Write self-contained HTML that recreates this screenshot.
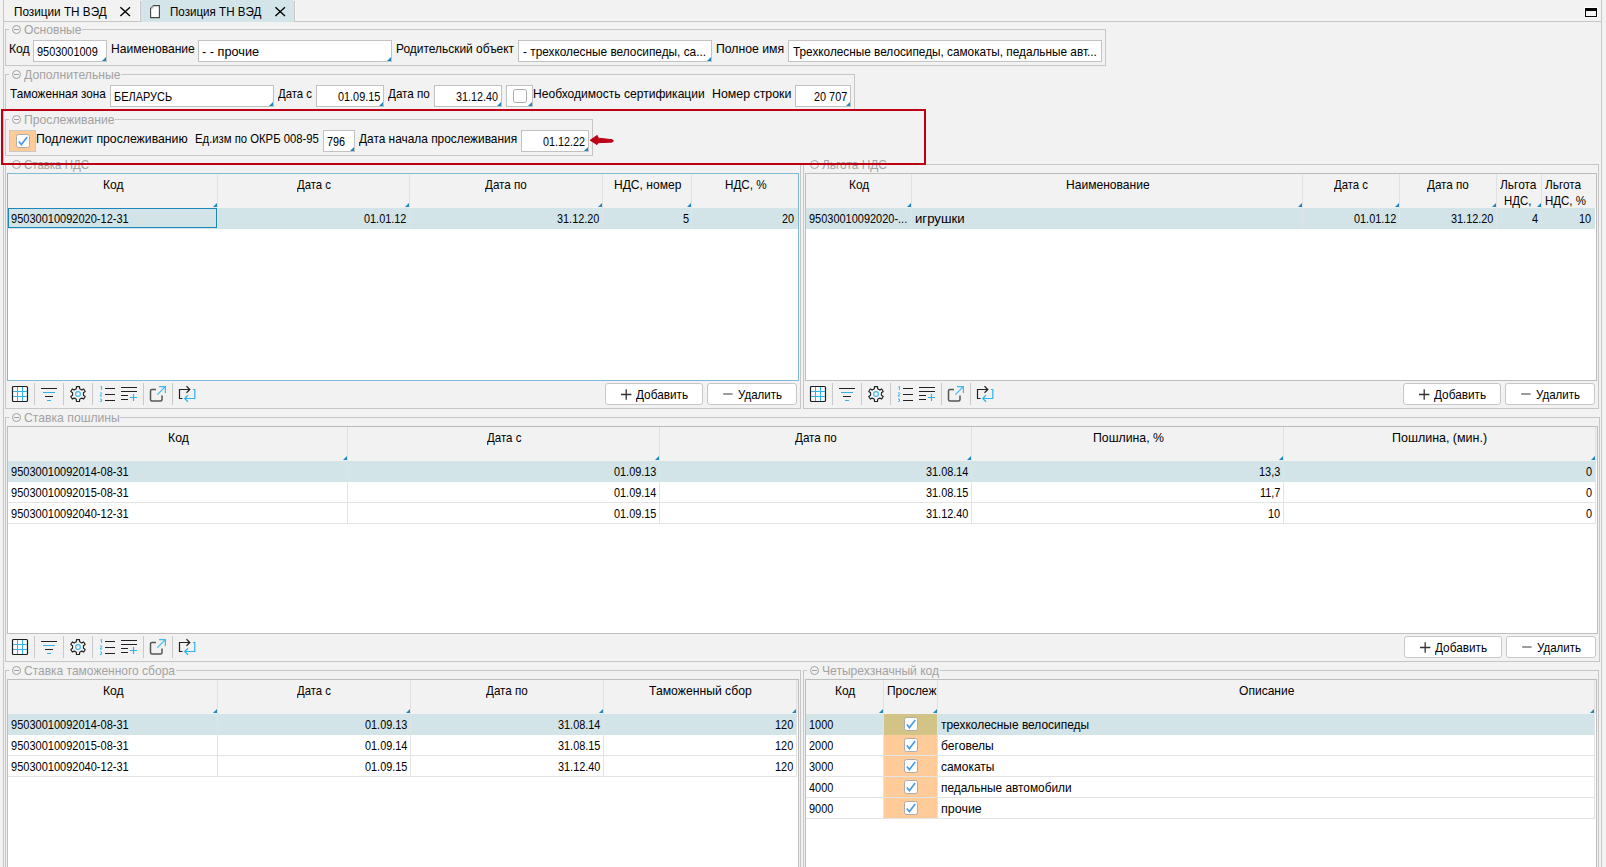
<!DOCTYPE html>
<html lang="ru"><head><meta charset="utf-8"><title>Позиция ТН ВЭД</title>
<style>
html,body{margin:0;padding:0;background:#f2f2f2}
body{width:1606px;height:867px;overflow:hidden;position:relative;background:#f2f2f2;font-family:"Liberation Sans",sans-serif;font-size:13px;color:#000}
div,.a{position:absolute}
svg{display:block;overflow:visible}
.t{position:absolute;white-space:nowrap;line-height:16px;transform-origin:0 0;display:block}
</style></head><body>
<div style="left:3px;top:0px;width:1px;height:867px;background:#c6c6c6;"></div>
<div style="left:1601px;top:0px;width:1px;height:867px;background:#c6c6c6;"></div>
<div style="left:4px;top:21px;width:137px;height:1px;background:#c6c6c6;"></div>
<div style="left:294px;top:21px;width:1307px;height:1px;background:#c6c6c6;"></div>
<div style="left:141px;top:0px;width:153px;height:22px;background:#d4e5ea;border-radius:2px 2px 0 0;"></div>
<div style="left:140px;top:1px;width:1px;height:21px;background:#c6c6c6;"></div>
<div style="left:294px;top:1px;width:1px;height:21px;background:#c6c6c6;"></div>
<div style="left:139px;top:2px;width:1px;height:19px;background:#f8f8f8;"></div>
<div style="left:295px;top:2px;width:1px;height:19px;background:#f8f8f8;"></div>
<span class="t" style="left:13.75px;top:3.50px;transform:scaleX(0.9037);">Позиции ТН ВЭД</span>
<span class="t" style="left:169.86px;top:3.50px;transform:scaleX(0.8926);">Позиция ТН ВЭД</span>
<svg class="a" style="left:120px;top:7px" width="11" height="10"><path d="M.4 .2L10 9M10 .2L.4 9" stroke="#000" stroke-width="1.35" fill="none"/></svg>
<svg class="a" style="left:275px;top:7px" width="11" height="10"><path d="M.4 .2L10 9M10 .2L.4 9" stroke="#000" stroke-width="1.35" fill="none"/></svg>
<svg class="a" style="left:150px;top:5px" width="11" height="14"><path d="M3.5 .6H9.4V12.6H.6V3.5Z" fill="#fff" stroke="#444" stroke-width="1.1"/><path d="M.6 3.5H3.5V.6Z" fill="#bbb"/></svg>
<svg class="a" style="left:1584px;top:7px" width="14" height="11"><rect x="0" y="0" width="14" height="11" fill="#fff" opacity=".9"/><rect x="1" y="1" width="12" height="9" fill="#000"/><rect x="2" y="4" width="10" height="5" fill="#f4f4f4"/></svg>
<div style="left:5px;top:29px;width:1101px;height:1px;background:#c6c6c6;"></div>
<div style="left:5px;top:29px;width:1px;height:37px;background:#c6c6c6;"></div>
<div style="left:1105px;top:29px;width:1px;height:37px;background:#c6c6c6;"></div>
<div style="left:5px;top:65px;width:1101px;height:1px;background:#c6c6c6;"></div>
<div style="left:9px;top:23px;width:73px;height:12px;background:#f2f2f2;"></div>
<svg class="a" style="left:11px;top:24px" width="11" height="11"><circle cx="5.5" cy="5.5" r="4" fill="none" stroke="#a2a2a2" stroke-width="1"/><path d="M3 5.5H8" stroke="#a2a2a2" stroke-width="1"/></svg>
<span class="t" style="left:24.00px;top:21.50px;transform:scaleX(0.9328);color:#a2a2a2;">Основные</span>
<span class="t" style="left:8.62px;top:40.50px;transform:scaleX(0.9371);">Код</span>
<div style="left:33px;top:40px;width:74px;height:22px;background:#fff;border:1px solid #c2c2c2;box-sizing:border-box;"></div>
<svg class="a" style="left:102px;top:57px" width="4" height="4"><path d="M4 0V4H0Z" fill="#1b87bf"/></svg>
<span class="t" style="left:36.80px;top:43.50px;transform:scaleX(0.8401);">9503001009</span>
<span class="t" style="left:111.02px;top:40.50px;transform:scaleX(0.9298);">Наименование</span>
<div style="left:198px;top:40px;width:194px;height:22px;background:#fff;border:1px solid #c2c2c2;box-sizing:border-box;"></div>
<svg class="a" style="left:387px;top:57px" width="4" height="4"><path d="M4 0V4H0Z" fill="#1b87bf"/></svg>
<span class="t" style="left:202.36px;top:43.50px;transform:scaleX(0.9796);">- - прочие</span>
<span class="t" style="left:396.04px;top:40.50px;transform:scaleX(0.9182);">Родительский объект</span>
<div style="left:518px;top:40px;width:194px;height:22px;background:#fff;border:1px solid #c2c2c2;box-sizing:border-box;"></div>
<svg class="a" style="left:707px;top:57px" width="4" height="4"><path d="M4 0V4H0Z" fill="#1b87bf"/></svg>
<span class="t" style="left:522.50px;top:43.50px;transform:scaleX(0.9106);">- трехколесные велосипеды, са...</span>
<span class="t" style="left:716.11px;top:40.50px;transform:scaleX(0.9416);">Полное имя</span>
<div style="left:788px;top:40px;width:314px;height:22px;background:#fff;border:1px solid #c2c2c2;box-sizing:border-box;"></div>
<span class="t" style="left:792.73px;top:43.50px;transform:scaleX(0.9074);">Трехколесные велосипеды, самокаты, педальные авт...</span>
<div style="left:5px;top:74px;width:850px;height:1px;background:#c6c6c6;"></div>
<div style="left:5px;top:74px;width:1px;height:37px;background:#c6c6c6;"></div>
<div style="left:854px;top:74px;width:1px;height:37px;background:#c6c6c6;"></div>
<div style="left:5px;top:110px;width:850px;height:1px;background:#c6c6c6;"></div>
<div style="left:9px;top:68px;width:112px;height:12px;background:#f2f2f2;"></div>
<svg class="a" style="left:11px;top:69px" width="11" height="11"><circle cx="5.5" cy="5.5" r="4" fill="none" stroke="#a2a2a2" stroke-width="1"/><path d="M3 5.5H8" stroke="#a2a2a2" stroke-width="1"/></svg>
<span class="t" style="left:24.00px;top:66.50px;transform:scaleX(0.9378);color:#a2a2a2;">Дополнительные</span>
<span class="t" style="left:9.83px;top:85.50px;transform:scaleX(0.9013);">Таможенная зона</span>
<div style="left:110px;top:85px;width:164px;height:22px;background:#fff;border:1px solid #c2c2c2;box-sizing:border-box;"></div>
<svg class="a" style="left:269px;top:102px" width="4" height="4"><path d="M4 0V4H0Z" fill="#1b87bf"/></svg>
<span class="t" style="left:114.21px;top:88.50px;transform:scaleX(0.8431);">БЕЛАРУСЬ</span>
<span class="t" style="left:278.11px;top:85.50px;transform:scaleX(0.8736);">Дата с</span>
<div style="left:316px;top:85px;width:68px;height:22px;background:#fff;border:1px solid #c2c2c2;box-sizing:border-box;"></div>
<svg class="a" style="left:379px;top:102px" width="4" height="4"><path d="M4 0V4H0Z" fill="#1b87bf"/></svg>
<span class="t" style="left:338.18px;top:88.50px;transform:scaleX(0.8354);">01.09.15</span>
<span class="t" style="left:388.31px;top:85.50px;transform:scaleX(0.8946);">Дата по</span>
<div style="left:434px;top:85px;width:68px;height:22px;background:#fff;border:1px solid #c2c2c2;box-sizing:border-box;"></div>
<svg class="a" style="left:497px;top:102px" width="4" height="4"><path d="M4 0V4H0Z" fill="#1b87bf"/></svg>
<span class="t" style="left:456.19px;top:88.50px;transform:scaleX(0.8285);">31.12.40</span>
<div style="left:506px;top:85px;width:27px;height:22px;background:#fff;border:1px solid #c2c2c2;box-sizing:border-box;"></div>
<svg class="a" style="left:528px;top:102px" width="4" height="4"><path d="M4 0V4H0Z" fill="#1b87bf"/></svg>
<svg class="a" style="left:513px;top:89px" width="14" height="14"><rect x=".5" y=".5" width="13" height="13" rx="2" fill="#fff" stroke="#aaa"/></svg>
<span class="t" style="left:532.63px;top:85.50px;transform:scaleX(0.9281);">Необходимость сертификации</span>
<span class="t" style="left:712.00px;top:85.50px;transform:scaleX(0.9502);">Номер строки</span>
<div style="left:795px;top:85px;width:56px;height:22px;background:#fff;border:1px solid #c2c2c2;box-sizing:border-box;"></div>
<svg class="a" style="left:846px;top:102px" width="4" height="4"><path d="M4 0V4H0Z" fill="#1b87bf"/></svg>
<span class="t" style="left:814.06px;top:88.50px;transform:scaleX(0.8362);">20 707</span>
<div style="left:5px;top:119px;width:588px;height:1px;background:#c6c6c6;"></div>
<div style="left:5px;top:119px;width:1px;height:37px;background:#c6c6c6;"></div>
<div style="left:592px;top:119px;width:1px;height:37px;background:#c6c6c6;"></div>
<div style="left:5px;top:155px;width:588px;height:1px;background:#c6c6c6;"></div>
<div style="left:9px;top:113px;width:106px;height:12px;background:#f2f2f2;"></div>
<svg class="a" style="left:11px;top:114px" width="11" height="11"><circle cx="5.5" cy="5.5" r="4" fill="none" stroke="#a2a2a2" stroke-width="1"/><path d="M3 5.5H8" stroke="#a2a2a2" stroke-width="1"/></svg>
<span class="t" style="left:24.00px;top:111.50px;transform:scaleX(0.9375);color:#a2a2a2;">Прослеживание</span>
<div style="left:9px;top:130px;width:27px;height:22px;background:#ffcc99;border:1px solid #c8c8c8;box-sizing:border-box;"></div>
<svg class="a" style="left:16px;top:134px" width="14" height="14"><rect x=".5" y=".5" width="13" height="13" rx="2" fill="#fff" stroke="#ababab"/><path d="M2.8 7.4L5.4 10.6L11.2 2.9" fill="none" stroke="#4a9be6" stroke-width="1.6"/></svg>
<span class="t" style="left:35.81px;top:130.50px;transform:scaleX(0.9425);">Подлежит прослеживанию</span>
<span class="t" style="left:195.09px;top:130.50px;transform:scaleX(0.8694);">Ед.изм по ОКРБ 008-95</span>
<div style="left:323px;top:130px;width:32px;height:22px;background:#fff;border:1px solid #c2c2c2;box-sizing:border-box;"></div>
<svg class="a" style="left:350px;top:147px" width="4" height="4"><path d="M4 0V4H0Z" fill="#1b87bf"/></svg>
<span class="t" style="left:327.46px;top:133.50px;transform:scaleX(0.8307);">796</span>
<span class="t" style="left:359.31px;top:130.50px;transform:scaleX(0.9136);">Дата начала прослеживания</span>
<div style="left:521px;top:130px;width:68px;height:22px;background:#fff;border:1px solid #c2c2c2;box-sizing:border-box;"></div>
<svg class="a" style="left:584px;top:147px" width="4" height="4"><path d="M4 0V4H0Z" fill="#1b87bf"/></svg>
<span class="t" style="left:543.09px;top:133.50px;transform:scaleX(0.8290);">01.12.22</span>
<svg class="a" style="left:589px;top:133px" width="28" height="15"><path d="M1.2 7.2L8.2 2.4L9.4 5.2L23.3 6.7Q25.3 7.9 23.3 9.1L9.4 9.7L8 11.6Z" fill="#bd0016" stroke="#bd0016" stroke-width="1" stroke-linejoin="round"/></svg>
<div style="left:5px;top:164px;width:796px;height:1px;background:#c6c6c6;"></div>
<div style="left:5px;top:164px;width:1px;height:245px;background:#c6c6c6;"></div>
<div style="left:800px;top:164px;width:1px;height:245px;background:#c6c6c6;"></div>
<div style="left:5px;top:408px;width:796px;height:1px;background:#c6c6c6;"></div>
<div style="left:9px;top:158px;width:80px;height:12px;background:#f2f2f2;"></div>
<svg class="a" style="left:11px;top:159px" width="11" height="11"><circle cx="5.5" cy="5.5" r="4" fill="none" stroke="#a2a2a2" stroke-width="1"/><path d="M3 5.5H8" stroke="#a2a2a2" stroke-width="1"/></svg>
<span class="t" style="left:24.00px;top:156.50px;transform:scaleX(0.8805);color:#a2a2a2;">Ставка НДС</span>
<div style="left:803px;top:164px;width:796px;height:1px;background:#c6c6c6;"></div>
<div style="left:803px;top:164px;width:1px;height:245px;background:#c6c6c6;"></div>
<div style="left:1598px;top:164px;width:1px;height:245px;background:#c6c6c6;"></div>
<div style="left:803px;top:408px;width:796px;height:1px;background:#c6c6c6;"></div>
<div style="left:807px;top:158px;width:80px;height:12px;background:#f2f2f2;"></div>
<svg class="a" style="left:809px;top:159px" width="11" height="11"><circle cx="5.5" cy="5.5" r="4" fill="none" stroke="#a2a2a2" stroke-width="1"/><path d="M3 5.5H8" stroke="#a2a2a2" stroke-width="1"/></svg>
<span class="t" style="left:822.00px;top:156.50px;transform:scaleX(0.9155);color:#a2a2a2;">Льгота НДС</span>
<div style="left:5px;top:417px;width:1595px;height:1px;background:#c6c6c6;"></div>
<div style="left:5px;top:417px;width:1px;height:245px;background:#c6c6c6;"></div>
<div style="left:1599px;top:417px;width:1px;height:245px;background:#c6c6c6;"></div>
<div style="left:5px;top:661px;width:1595px;height:1px;background:#c6c6c6;"></div>
<div style="left:9px;top:411px;width:111px;height:12px;background:#f2f2f2;"></div>
<svg class="a" style="left:11px;top:412px" width="11" height="11"><circle cx="5.5" cy="5.5" r="4" fill="none" stroke="#a2a2a2" stroke-width="1"/><path d="M3 5.5H8" stroke="#a2a2a2" stroke-width="1"/></svg>
<span class="t" style="left:24.00px;top:409.50px;transform:scaleX(0.9378);color:#a2a2a2;">Ставка пошлины</span>
<div style="left:5px;top:670px;width:796px;height:1px;background:#c6c6c6;"></div>
<div style="left:5px;top:670px;width:1px;height:198px;background:#c6c6c6;"></div>
<div style="left:800px;top:670px;width:1px;height:198px;background:#c6c6c6;"></div>
<div style="left:9px;top:664px;width:167px;height:12px;background:#f2f2f2;"></div>
<svg class="a" style="left:11px;top:665px" width="11" height="11"><circle cx="5.5" cy="5.5" r="4" fill="none" stroke="#a2a2a2" stroke-width="1"/><path d="M3 5.5H8" stroke="#a2a2a2" stroke-width="1"/></svg>
<span class="t" style="left:24.00px;top:662.50px;transform:scaleX(0.9227);color:#a2a2a2;">Ставка таможенного сбора</span>
<div style="left:803px;top:670px;width:796px;height:1px;background:#c6c6c6;"></div>
<div style="left:803px;top:670px;width:1px;height:198px;background:#c6c6c6;"></div>
<div style="left:1598px;top:670px;width:1px;height:198px;background:#c6c6c6;"></div>
<div style="left:807px;top:664px;width:133px;height:12px;background:#f2f2f2;"></div>
<svg class="a" style="left:809px;top:665px" width="11" height="11"><circle cx="5.5" cy="5.5" r="4" fill="none" stroke="#a2a2a2" stroke-width="1"/><path d="M3 5.5H8" stroke="#a2a2a2" stroke-width="1"/></svg>
<span class="t" style="left:822.00px;top:662.50px;transform:scaleX(0.9303);color:#a2a2a2;">Четырехзначный код</span>
<div style="left:7px;top:173px;width:792px;height:208px;background:#fff;border:1px solid #7fb9d5;box-sizing:border-box;"></div>
<div style="left:8px;top:174px;width:790px;height:34px;background:#f2f2f2;"></div>
<div style="left:217px;top:174px;width:1px;height:34px;background:#e1e1e1;"></div>
<div style="left:409px;top:174px;width:1px;height:34px;background:#e1e1e1;"></div>
<div style="left:602px;top:174px;width:1px;height:34px;background:#e1e1e1;"></div>
<div style="left:691px;top:174px;width:1px;height:34px;background:#e1e1e1;"></div>
<svg class="a" style="left:213px;top:203px" width="4" height="4"><path d="M4 0V4H0Z" fill="#1b87bf"/></svg>
<svg class="a" style="left:405px;top:203px" width="4" height="4"><path d="M4 0V4H0Z" fill="#1b87bf"/></svg>
<svg class="a" style="left:598px;top:203px" width="4" height="4"><path d="M4 0V4H0Z" fill="#1b87bf"/></svg>
<svg class="a" style="left:687px;top:203px" width="4" height="4"><path d="M4 0V4H0Z" fill="#1b87bf"/></svg>
<span class="t" style="left:102.93px;top:176.50px;transform:scaleX(0.9275);">Код</span>
<span class="t" style="left:297.31px;top:176.50px;transform:scaleX(0.8736);">Дата с</span>
<span class="t" style="left:485.11px;top:176.50px;transform:scaleX(0.8967);">Дата по</span>
<span class="t" style="left:614.13px;top:176.50px;transform:scaleX(0.9273);">НДС, номер</span>
<span class="t" style="left:725.06px;top:176.50px;transform:scaleX(0.8961);">НДС, %</span>
<div style="left:8px;top:208px;width:790px;height:21px;background:#d3e4e9;"></div>
<div style="left:217px;top:208px;width:1px;height:21px;background:#dfe4e6;"></div>
<div style="left:409px;top:208px;width:1px;height:21px;background:#dfe4e6;"></div>
<div style="left:602px;top:208px;width:1px;height:21px;background:#dfe4e6;"></div>
<div style="left:691px;top:208px;width:1px;height:21px;background:#dfe4e6;"></div>
<div style="left:8px;top:208px;width:209px;height:20px;border:1px solid #1b88bd;box-sizing:border-box;"></div>
<span class="t" style="left:11.09px;top:210.50px;transform:scaleX(0.8483);">95030010092020-12-31</span>
<span class="t" style="left:364.12px;top:210.50px;transform:scaleX(0.8383);">01.01.12</span>
<span class="t" style="left:557.00px;top:210.50px;transform:scaleX(0.8383);">31.12.20</span>
<span class="t" style="left:682.57px;top:210.50px;transform:scaleX(0.8401);">5</span>
<span class="t" style="left:782.23px;top:210.50px;transform:scaleX(0.8401);">20</span>
<div style="left:805px;top:173px;width:792px;height:208px;background:#fff;border:1px solid #bdbdbd;box-sizing:border-box;"></div>
<div style="left:806px;top:174px;width:790px;height:34px;background:#f2f2f2;"></div>
<div style="left:911px;top:174px;width:1px;height:34px;background:#e1e1e1;"></div>
<div style="left:1302px;top:174px;width:1px;height:34px;background:#e1e1e1;"></div>
<div style="left:1399px;top:174px;width:1px;height:34px;background:#e1e1e1;"></div>
<div style="left:1496px;top:174px;width:1px;height:34px;background:#e1e1e1;"></div>
<div style="left:1541px;top:174px;width:1px;height:34px;background:#e1e1e1;"></div>
<svg class="a" style="left:907px;top:203px" width="4" height="4"><path d="M4 0V4H0Z" fill="#1b87bf"/></svg>
<svg class="a" style="left:1298px;top:203px" width="4" height="4"><path d="M4 0V4H0Z" fill="#1b87bf"/></svg>
<svg class="a" style="left:1395px;top:203px" width="4" height="4"><path d="M4 0V4H0Z" fill="#1b87bf"/></svg>
<svg class="a" style="left:1492px;top:203px" width="4" height="4"><path d="M4 0V4H0Z" fill="#1b87bf"/></svg>
<svg class="a" style="left:1537px;top:203px" width="4" height="4"><path d="M4 0V4H0Z" fill="#1b87bf"/></svg>
<span class="t" style="left:849.04px;top:176.50px;transform:scaleX(0.9131);">Код</span>
<span class="t" style="left:1066.33px;top:176.50px;transform:scaleX(0.9276);">Наименование</span>
<span class="t" style="left:1333.51px;top:176.50px;transform:scaleX(0.8736);">Дата с</span>
<span class="t" style="left:1427.31px;top:176.50px;transform:scaleX(0.8967);">Дата по</span>
<span class="t" style="left:1499.71px;top:176.50px;transform:scaleX(0.9178);">Льгота</span>
<span class="t" style="left:1545.31px;top:176.50px;transform:scaleX(0.9103);">Льгота</span>
<span class="t" style="left:1503.68px;top:192.50px;transform:scaleX(0.8755);">НДС,</span>
<span class="t" style="left:1545.47px;top:192.50px;transform:scaleX(0.8827);">НДС, %</span>
<div style="left:806px;top:208px;width:789px;height:21px;background:#d3e4e9;"></div>
<div style="left:911px;top:208px;width:1px;height:21px;background:#dfe4e6;"></div>
<div style="left:1302px;top:208px;width:1px;height:21px;background:#dfe4e6;"></div>
<div style="left:1399px;top:208px;width:1px;height:21px;background:#dfe4e6;"></div>
<div style="left:1496px;top:208px;width:1px;height:21px;background:#dfe4e6;"></div>
<div style="left:1541px;top:208px;width:1px;height:21px;background:#dfe4e6;"></div>
<span class="t" style="left:809.19px;top:210.50px;transform:scaleX(0.8437);">95030010092020-...</span>
<span class="t" style="left:915.29px;top:210.50px;transform:scaleX(1.0137);">игрушки</span>
<span class="t" style="left:1353.92px;top:210.50px;transform:scaleX(0.8383);">01.01.12</span>
<span class="t" style="left:1450.80px;top:210.50px;transform:scaleX(0.8383);">31.12.20</span>
<span class="t" style="left:1532.04px;top:210.50px;transform:scaleX(0.8401);">4</span>
<span class="t" style="left:1579.13px;top:210.50px;transform:scaleX(0.8401);">10</span>
<svg class="a" style="left:7px;top:380px" width="200" height="28"><g transform="translate(5,6)"><rect x=".5" y=".5" width="15" height="15" rx="1" fill="#fbfbfb" stroke="#1e1e1e" stroke-width="1.2"/><path d="M5.5 1V15M10.5 1V15M1 5.5H15M1 10.5H15" stroke="#2eb3ec" stroke-width="1"/></g><path d="M27.5 3V25" stroke="#c9c9c9"/><path d="M56.5 3V25" stroke="#c9c9c9"/><path d="M85.5 3V25" stroke="#c9c9c9"/><path d="M136.5 3V25" stroke="#c9c9c9"/><path d="M165.5 3V25" stroke="#c9c9c9"/><path d="M34 8.5H50M38 16.5H46" stroke="#222" stroke-width="1.1"/><path d="M36 12.5H48M40 20.5H44" stroke="#2eb3ec" stroke-width="1.2"/><path d="M69.35 8.65L69.49 6.55L72.51 6.55L72.65 8.65L74.81 9.89L76.70 8.97L78.21 11.58L76.46 12.76L76.46 15.24L78.21 16.42L76.70 19.03L74.81 18.11L72.65 19.35L72.51 21.45L69.49 21.45L69.35 19.35L67.19 18.11L65.30 19.03L63.79 16.42L65.54 15.24L65.54 12.76L63.79 11.58L65.30 8.97L67.19 9.89Z" fill="none" stroke="#222" stroke-width="1.15" stroke-linejoin="round"/><circle cx="71" cy="14" r="2.4" fill="none" stroke="#3fb8ee" stroke-width="1.1"/><path d="M98 8.5H108M98 14.5H108M98 20.5H108" stroke="#222" stroke-width="1.1"/><path d="M93.3 7.2L94.6 6.4V10M93 13.2Q94.8 12 94.8 13.6L93 16H95.2M93 19Q95 18.6 94.6 20Q95.4 21.8 93 21.6" stroke="#2eb3ec" stroke-width=".9" fill="none"/><path d="M114 7.5H130M114 11.5H130M114 15.5H121M114 19.5H121" stroke="#222" stroke-width="1.1"/><path d="M123 17.5H130M126.5 14V21" stroke="#2eb3ec" stroke-width="1.2"/><path d="M149 9.5H145Q143.5 9.5 143.5 11V19.5Q143.5 21 145 21H153.5Q155 21 155 19.5V15.5" fill="none" stroke="#555" stroke-width="1.5"/><path d="M150.4 14.6L158.3 6.7M152 6.6H158.4V13" fill="none" stroke="#3fb8ee" stroke-width="1.2"/><path d="M175.5 18.5H172.5V9.5H182.5M179.5 6.3L182.8 9.5L179.5 12.7" fill="none" stroke="#222" stroke-width="1.2"/><path d="M186 9.5H187.8V18.5H178M181 15.3L177.7 18.5L181 21.7" fill="none" stroke="#2eb3ec" stroke-width="1.2"/></svg>
<div style="left:605px;top:383px;width:98px;height:22px;background:#fff;border:1px solid #c8c8c8;box-sizing:border-box;border-radius:3px;"></div>
<div style="left:707px;top:383px;width:90px;height:22px;background:#fff;border:1px solid #c8c8c8;box-sizing:border-box;border-radius:3px;"></div>
<svg class="a" style="left:621px;top:389px" width="11" height="11"><path d="M0 5.5H10.4M5.2 .3V10.7" stroke="#333" stroke-width="1.3"/></svg>
<svg class="a" style="left:723px;top:393px" width="10" height="2"><path d="M.2 1H9.6" stroke="#666" stroke-width="1.3"/></svg>
<span class="t" style="left:636.31px;top:386.90px;transform:scaleX(0.9076);">Добавить</span>
<span class="t" style="left:737.99px;top:386.90px;transform:scaleX(0.8860);">Удалить</span>
<svg class="a" style="left:805px;top:380px" width="200" height="28"><g transform="translate(5,6)"><rect x=".5" y=".5" width="15" height="15" rx="1" fill="#fbfbfb" stroke="#1e1e1e" stroke-width="1.2"/><path d="M5.5 1V15M10.5 1V15M1 5.5H15M1 10.5H15" stroke="#2eb3ec" stroke-width="1"/></g><path d="M27.5 3V25" stroke="#c9c9c9"/><path d="M56.5 3V25" stroke="#c9c9c9"/><path d="M85.5 3V25" stroke="#c9c9c9"/><path d="M136.5 3V25" stroke="#c9c9c9"/><path d="M165.5 3V25" stroke="#c9c9c9"/><path d="M34 8.5H50M38 16.5H46" stroke="#222" stroke-width="1.1"/><path d="M36 12.5H48M40 20.5H44" stroke="#2eb3ec" stroke-width="1.2"/><path d="M69.35 8.65L69.49 6.55L72.51 6.55L72.65 8.65L74.81 9.89L76.70 8.97L78.21 11.58L76.46 12.76L76.46 15.24L78.21 16.42L76.70 19.03L74.81 18.11L72.65 19.35L72.51 21.45L69.49 21.45L69.35 19.35L67.19 18.11L65.30 19.03L63.79 16.42L65.54 15.24L65.54 12.76L63.79 11.58L65.30 8.97L67.19 9.89Z" fill="none" stroke="#222" stroke-width="1.15" stroke-linejoin="round"/><circle cx="71" cy="14" r="2.4" fill="none" stroke="#3fb8ee" stroke-width="1.1"/><path d="M98 8.5H108M98 14.5H108M98 20.5H108" stroke="#222" stroke-width="1.1"/><path d="M93.3 7.2L94.6 6.4V10M93 13.2Q94.8 12 94.8 13.6L93 16H95.2M93 19Q95 18.6 94.6 20Q95.4 21.8 93 21.6" stroke="#2eb3ec" stroke-width=".9" fill="none"/><path d="M114 7.5H130M114 11.5H130M114 15.5H121M114 19.5H121" stroke="#222" stroke-width="1.1"/><path d="M123 17.5H130M126.5 14V21" stroke="#2eb3ec" stroke-width="1.2"/><path d="M149 9.5H145Q143.5 9.5 143.5 11V19.5Q143.5 21 145 21H153.5Q155 21 155 19.5V15.5" fill="none" stroke="#555" stroke-width="1.5"/><path d="M150.4 14.6L158.3 6.7M152 6.6H158.4V13" fill="none" stroke="#3fb8ee" stroke-width="1.2"/><path d="M175.5 18.5H172.5V9.5H182.5M179.5 6.3L182.8 9.5L179.5 12.7" fill="none" stroke="#222" stroke-width="1.2"/><path d="M186 9.5H187.8V18.5H178M181 15.3L177.7 18.5L181 21.7" fill="none" stroke="#2eb3ec" stroke-width="1.2"/></svg>
<div style="left:1403px;top:383px;width:98px;height:22px;background:#fff;border:1px solid #c8c8c8;box-sizing:border-box;border-radius:3px;"></div>
<div style="left:1505px;top:383px;width:90px;height:22px;background:#fff;border:1px solid #c8c8c8;box-sizing:border-box;border-radius:3px;"></div>
<svg class="a" style="left:1419px;top:389px" width="11" height="11"><path d="M0 5.5H10.4M5.2 .3V10.7" stroke="#333" stroke-width="1.3"/></svg>
<svg class="a" style="left:1521px;top:393px" width="10" height="2"><path d="M.2 1H9.6" stroke="#666" stroke-width="1.3"/></svg>
<span class="t" style="left:1434.31px;top:386.90px;transform:scaleX(0.9076);">Добавить</span>
<span class="t" style="left:1535.99px;top:386.90px;transform:scaleX(0.8860);">Удалить</span>
<div style="left:7px;top:426px;width:1591px;height:208px;background:#fff;border:1px solid #bdbdbd;box-sizing:border-box;"></div>
<div style="left:8px;top:427px;width:1589px;height:34px;background:#f2f2f2;"></div>
<div style="left:347px;top:427px;width:1px;height:34px;background:#e1e1e1;"></div>
<div style="left:659px;top:427px;width:1px;height:34px;background:#e1e1e1;"></div>
<div style="left:971px;top:427px;width:1px;height:34px;background:#e1e1e1;"></div>
<div style="left:1283px;top:427px;width:1px;height:34px;background:#e1e1e1;"></div>
<div style="left:1595px;top:427px;width:1px;height:34px;background:#e1e1e1;"></div>
<svg class="a" style="left:343px;top:456px" width="4" height="4"><path d="M4 0V4H0Z" fill="#1b87bf"/></svg>
<svg class="a" style="left:655px;top:456px" width="4" height="4"><path d="M4 0V4H0Z" fill="#1b87bf"/></svg>
<svg class="a" style="left:967px;top:456px" width="4" height="4"><path d="M4 0V4H0Z" fill="#1b87bf"/></svg>
<svg class="a" style="left:1279px;top:456px" width="4" height="4"><path d="M4 0V4H0Z" fill="#1b87bf"/></svg>
<svg class="a" style="left:1591px;top:456px" width="4" height="4"><path d="M4 0V4H0Z" fill="#1b87bf"/></svg>
<span class="t" style="left:168.21px;top:429.50px;transform:scaleX(0.9420);">Код</span>
<span class="t" style="left:487.11px;top:429.50px;transform:scaleX(0.8840);">Дата с</span>
<span class="t" style="left:795.01px;top:429.50px;transform:scaleX(0.8967);">Дата по</span>
<span class="t" style="left:1092.81px;top:429.50px;transform:scaleX(0.9449);">Пошлина, %</span>
<span class="t" style="left:1392.39px;top:429.50px;transform:scaleX(0.9588);">Пошлина, (мин.)</span>
<div style="left:8px;top:461px;width:1587px;height:21px;background:#d3e4e9;"></div>
<div style="left:347px;top:461px;width:1px;height:21px;background:#dfe4e6;"></div>
<div style="left:659px;top:461px;width:1px;height:21px;background:#dfe4e6;"></div>
<div style="left:971px;top:461px;width:1px;height:21px;background:#dfe4e6;"></div>
<div style="left:1283px;top:461px;width:1px;height:21px;background:#dfe4e6;"></div>
<div style="left:1595px;top:461px;width:1px;height:21px;background:#dfe4e6;"></div>
<div style="left:8px;top:502px;width:1587px;height:1px;background:#e3e3e3;"></div>
<div style="left:347px;top:482px;width:1px;height:21px;background:#e3e3e3;"></div>
<div style="left:659px;top:482px;width:1px;height:21px;background:#e3e3e3;"></div>
<div style="left:971px;top:482px;width:1px;height:21px;background:#e3e3e3;"></div>
<div style="left:1283px;top:482px;width:1px;height:21px;background:#e3e3e3;"></div>
<div style="left:1595px;top:482px;width:1px;height:21px;background:#e3e3e3;"></div>
<div style="left:8px;top:523px;width:1587px;height:1px;background:#e3e3e3;"></div>
<div style="left:347px;top:503px;width:1px;height:21px;background:#e3e3e3;"></div>
<div style="left:659px;top:503px;width:1px;height:21px;background:#e3e3e3;"></div>
<div style="left:971px;top:503px;width:1px;height:21px;background:#e3e3e3;"></div>
<div style="left:1283px;top:503px;width:1px;height:21px;background:#e3e3e3;"></div>
<div style="left:1595px;top:503px;width:1px;height:21px;background:#e3e3e3;"></div>
<span class="t" style="left:11.09px;top:463.50px;transform:scaleX(0.8483);">95030010092014-08-31</span>
<span class="t" style="left:613.78px;top:463.50px;transform:scaleX(0.8383);">01.09.13</span>
<span class="t" style="left:925.61px;top:463.50px;transform:scaleX(0.8383);">31.08.14</span>
<span class="t" style="left:1259.04px;top:463.50px;transform:scaleX(0.8401);">13,3</span>
<span class="t" style="left:1586.23px;top:463.50px;transform:scaleX(0.8401);">0</span>
<span class="t" style="left:11.09px;top:484.50px;transform:scaleX(0.8483);">95030010092015-08-31</span>
<span class="t" style="left:613.61px;top:484.50px;transform:scaleX(0.8383);">01.09.14</span>
<span class="t" style="left:925.74px;top:484.50px;transform:scaleX(0.8383);">31.08.15</span>
<span class="t" style="left:1259.88px;top:484.50px;transform:scaleX(0.8401);">11,7</span>
<span class="t" style="left:1586.23px;top:484.50px;transform:scaleX(0.8401);">0</span>
<span class="t" style="left:11.09px;top:505.50px;transform:scaleX(0.8483);">95030010092040-12-31</span>
<span class="t" style="left:613.74px;top:505.50px;transform:scaleX(0.8383);">01.09.15</span>
<span class="t" style="left:925.70px;top:505.50px;transform:scaleX(0.8383);">31.12.40</span>
<span class="t" style="left:1268.03px;top:505.50px;transform:scaleX(0.8401);">10</span>
<span class="t" style="left:1586.23px;top:505.50px;transform:scaleX(0.8401);">0</span>
<svg class="a" style="left:7px;top:633px" width="200" height="28"><g transform="translate(5,6)"><rect x=".5" y=".5" width="15" height="15" rx="1" fill="#fbfbfb" stroke="#1e1e1e" stroke-width="1.2"/><path d="M5.5 1V15M10.5 1V15M1 5.5H15M1 10.5H15" stroke="#2eb3ec" stroke-width="1"/></g><path d="M27.5 3V25" stroke="#c9c9c9"/><path d="M56.5 3V25" stroke="#c9c9c9"/><path d="M85.5 3V25" stroke="#c9c9c9"/><path d="M136.5 3V25" stroke="#c9c9c9"/><path d="M165.5 3V25" stroke="#c9c9c9"/><path d="M34 8.5H50M38 16.5H46" stroke="#222" stroke-width="1.1"/><path d="M36 12.5H48M40 20.5H44" stroke="#2eb3ec" stroke-width="1.2"/><path d="M69.35 8.65L69.49 6.55L72.51 6.55L72.65 8.65L74.81 9.89L76.70 8.97L78.21 11.58L76.46 12.76L76.46 15.24L78.21 16.42L76.70 19.03L74.81 18.11L72.65 19.35L72.51 21.45L69.49 21.45L69.35 19.35L67.19 18.11L65.30 19.03L63.79 16.42L65.54 15.24L65.54 12.76L63.79 11.58L65.30 8.97L67.19 9.89Z" fill="none" stroke="#222" stroke-width="1.15" stroke-linejoin="round"/><circle cx="71" cy="14" r="2.4" fill="none" stroke="#3fb8ee" stroke-width="1.1"/><path d="M98 8.5H108M98 14.5H108M98 20.5H108" stroke="#222" stroke-width="1.1"/><path d="M93.3 7.2L94.6 6.4V10M93 13.2Q94.8 12 94.8 13.6L93 16H95.2M93 19Q95 18.6 94.6 20Q95.4 21.8 93 21.6" stroke="#2eb3ec" stroke-width=".9" fill="none"/><path d="M114 7.5H130M114 11.5H130M114 15.5H121M114 19.5H121" stroke="#222" stroke-width="1.1"/><path d="M123 17.5H130M126.5 14V21" stroke="#2eb3ec" stroke-width="1.2"/><path d="M149 9.5H145Q143.5 9.5 143.5 11V19.5Q143.5 21 145 21H153.5Q155 21 155 19.5V15.5" fill="none" stroke="#555" stroke-width="1.5"/><path d="M150.4 14.6L158.3 6.7M152 6.6H158.4V13" fill="none" stroke="#3fb8ee" stroke-width="1.2"/><path d="M175.5 18.5H172.5V9.5H182.5M179.5 6.3L182.8 9.5L179.5 12.7" fill="none" stroke="#222" stroke-width="1.2"/><path d="M186 9.5H187.8V18.5H178M181 15.3L177.7 18.5L181 21.7" fill="none" stroke="#2eb3ec" stroke-width="1.2"/></svg>
<div style="left:1404px;top:636px;width:98px;height:22px;background:#fff;border:1px solid #c8c8c8;box-sizing:border-box;border-radius:3px;"></div>
<div style="left:1506px;top:636px;width:90px;height:22px;background:#fff;border:1px solid #c8c8c8;box-sizing:border-box;border-radius:3px;"></div>
<svg class="a" style="left:1420px;top:642px" width="11" height="11"><path d="M0 5.5H10.4M5.2 .3V10.7" stroke="#333" stroke-width="1.3"/></svg>
<svg class="a" style="left:1522px;top:646px" width="10" height="2"><path d="M.2 1H9.6" stroke="#666" stroke-width="1.3"/></svg>
<span class="t" style="left:1435.31px;top:639.90px;transform:scaleX(0.9076);">Добавить</span>
<span class="t" style="left:1536.99px;top:639.90px;transform:scaleX(0.8860);">Удалить</span>
<div style="left:7px;top:679px;width:792px;height:192px;background:#fff;border:1px solid #bdbdbd;box-sizing:border-box;"></div>
<div style="left:8px;top:680px;width:790px;height:34px;background:#f2f2f2;"></div>
<div style="left:217px;top:680px;width:1px;height:34px;background:#e1e1e1;"></div>
<div style="left:410px;top:680px;width:1px;height:34px;background:#e1e1e1;"></div>
<div style="left:603px;top:680px;width:1px;height:34px;background:#e1e1e1;"></div>
<div style="left:796px;top:680px;width:1px;height:34px;background:#e1e1e1;"></div>
<svg class="a" style="left:213px;top:709px" width="4" height="4"><path d="M4 0V4H0Z" fill="#1b87bf"/></svg>
<svg class="a" style="left:406px;top:709px" width="4" height="4"><path d="M4 0V4H0Z" fill="#1b87bf"/></svg>
<svg class="a" style="left:599px;top:709px" width="4" height="4"><path d="M4 0V4H0Z" fill="#1b87bf"/></svg>
<svg class="a" style="left:792px;top:709px" width="4" height="4"><path d="M4 0V4H0Z" fill="#1b87bf"/></svg>
<span class="t" style="left:102.82px;top:682.50px;transform:scaleX(0.9371);">Код</span>
<span class="t" style="left:297.21px;top:682.50px;transform:scaleX(0.8736);">Дата с</span>
<span class="t" style="left:486.31px;top:682.50px;transform:scaleX(0.8967);">Дата по</span>
<span class="t" style="left:648.92px;top:682.50px;transform:scaleX(0.9382);">Таможенный сбор</span>
<div style="left:8px;top:714px;width:788px;height:21px;background:#d3e4e9;"></div>
<div style="left:217px;top:714px;width:1px;height:21px;background:#dfe4e6;"></div>
<div style="left:410px;top:714px;width:1px;height:21px;background:#dfe4e6;"></div>
<div style="left:603px;top:714px;width:1px;height:21px;background:#dfe4e6;"></div>
<div style="left:796px;top:714px;width:1px;height:21px;background:#dfe4e6;"></div>
<div style="left:8px;top:755px;width:788px;height:1px;background:#e3e3e3;"></div>
<div style="left:217px;top:735px;width:1px;height:21px;background:#e3e3e3;"></div>
<div style="left:410px;top:735px;width:1px;height:21px;background:#e3e3e3;"></div>
<div style="left:603px;top:735px;width:1px;height:21px;background:#e3e3e3;"></div>
<div style="left:796px;top:735px;width:1px;height:21px;background:#e3e3e3;"></div>
<div style="left:8px;top:776px;width:788px;height:1px;background:#e3e3e3;"></div>
<div style="left:217px;top:756px;width:1px;height:21px;background:#e3e3e3;"></div>
<div style="left:410px;top:756px;width:1px;height:21px;background:#e3e3e3;"></div>
<div style="left:603px;top:756px;width:1px;height:21px;background:#e3e3e3;"></div>
<div style="left:796px;top:756px;width:1px;height:21px;background:#e3e3e3;"></div>
<span class="t" style="left:11.09px;top:716.50px;transform:scaleX(0.8483);">95030010092014-08-31</span>
<span class="t" style="left:364.68px;top:716.50px;transform:scaleX(0.8383);">01.09.13</span>
<span class="t" style="left:557.51px;top:716.50px;transform:scaleX(0.8383);">31.08.14</span>
<span class="t" style="left:775.08px;top:716.50px;transform:scaleX(0.8401);">120</span>
<span class="t" style="left:11.09px;top:737.50px;transform:scaleX(0.8483);">95030010092015-08-31</span>
<span class="t" style="left:364.51px;top:737.50px;transform:scaleX(0.8383);">01.09.14</span>
<span class="t" style="left:557.64px;top:737.50px;transform:scaleX(0.8383);">31.08.15</span>
<span class="t" style="left:775.08px;top:737.50px;transform:scaleX(0.8401);">120</span>
<span class="t" style="left:11.09px;top:758.50px;transform:scaleX(0.8483);">95030010092040-12-31</span>
<span class="t" style="left:364.64px;top:758.50px;transform:scaleX(0.8383);">01.09.15</span>
<span class="t" style="left:557.60px;top:758.50px;transform:scaleX(0.8383);">31.12.40</span>
<span class="t" style="left:775.08px;top:758.50px;transform:scaleX(0.8401);">120</span>
<div style="left:805px;top:679px;width:792px;height:192px;background:#fff;border:1px solid #bdbdbd;box-sizing:border-box;"></div>
<div style="left:806px;top:680px;width:790px;height:34px;background:#f2f2f2;"></div>
<div style="left:883px;top:680px;width:1px;height:34px;background:#e1e1e1;"></div>
<div style="left:937px;top:680px;width:1px;height:34px;background:#e1e1e1;"></div>
<div style="left:1594px;top:680px;width:1px;height:34px;background:#e1e1e1;"></div>
<svg class="a" style="left:879px;top:709px" width="4" height="4"><path d="M4 0V4H0Z" fill="#1b87bf"/></svg>
<svg class="a" style="left:933px;top:709px" width="4" height="4"><path d="M4 0V4H0Z" fill="#1b87bf"/></svg>
<svg class="a" style="left:1590px;top:709px" width="4" height="4"><path d="M4 0V4H0Z" fill="#1b87bf"/></svg>
<span class="t" style="left:834.94px;top:682.50px;transform:scaleX(0.9179);">Код</span>
<div class="a" style="left:884px;top:680px;width:53px;height:30px;overflow:hidden"><span class="t" style="left:2.53px;top:2.50px;transform:scaleX(0.9203)">Прослеж</span></div>
<span class="t" style="left:1239.04px;top:682.50px;transform:scaleX(0.9273);">Описание</span>
<div style="left:806px;top:714px;width:788px;height:21px;background:#d3e4e9;"></div>
<div style="left:883px;top:714px;width:1px;height:21px;background:#dfe4e6;"></div>
<div style="left:937px;top:714px;width:1px;height:21px;background:#dfe4e6;"></div>
<div style="left:1594px;top:714px;width:1px;height:21px;background:#dfe4e6;"></div>
<div style="left:806px;top:755px;width:788px;height:1px;background:#e3e3e3;"></div>
<div style="left:883px;top:735px;width:1px;height:21px;background:#e3e3e3;"></div>
<div style="left:937px;top:735px;width:1px;height:21px;background:#e3e3e3;"></div>
<div style="left:1594px;top:735px;width:1px;height:21px;background:#e3e3e3;"></div>
<div style="left:806px;top:776px;width:788px;height:1px;background:#e3e3e3;"></div>
<div style="left:883px;top:756px;width:1px;height:21px;background:#e3e3e3;"></div>
<div style="left:937px;top:756px;width:1px;height:21px;background:#e3e3e3;"></div>
<div style="left:1594px;top:756px;width:1px;height:21px;background:#e3e3e3;"></div>
<div style="left:806px;top:797px;width:788px;height:1px;background:#e3e3e3;"></div>
<div style="left:883px;top:777px;width:1px;height:21px;background:#e3e3e3;"></div>
<div style="left:937px;top:777px;width:1px;height:21px;background:#e3e3e3;"></div>
<div style="left:1594px;top:777px;width:1px;height:21px;background:#e3e3e3;"></div>
<div style="left:806px;top:818px;width:788px;height:1px;background:#e3e3e3;"></div>
<div style="left:883px;top:798px;width:1px;height:21px;background:#e3e3e3;"></div>
<div style="left:937px;top:798px;width:1px;height:21px;background:#e3e3e3;"></div>
<div style="left:1594px;top:798px;width:1px;height:21px;background:#e3e3e3;"></div>
<div style="left:884px;top:714px;width:53px;height:21px;background:#d2c387;"></div>
<svg class="a" style="left:904px;top:717px" width="14" height="14"><rect x=".5" y=".5" width="13" height="13" rx="2" fill="#fff" stroke="#ababab"/><path d="M2.8 7.4L5.4 10.6L11.2 2.9" fill="none" stroke="#4a9be6" stroke-width="1.6"/></svg>
<span class="t" style="left:808.70px;top:716.50px;transform:scaleX(0.8401);">1000</span>
<span class="t" style="left:941.12px;top:716.50px;transform:scaleX(0.9182);">трехколесные велосипеды</span>
<div style="left:884px;top:735px;width:53px;height:20px;background:#ffcc99;"></div>
<svg class="a" style="left:904px;top:738px" width="14" height="14"><rect x=".5" y=".5" width="13" height="13" rx="2" fill="#fff" stroke="#ababab"/><path d="M2.8 7.4L5.4 10.6L11.2 2.9" fill="none" stroke="#4a9be6" stroke-width="1.6"/></svg>
<span class="t" style="left:808.70px;top:737.50px;transform:scaleX(0.8401);">2000</span>
<span class="t" style="left:940.90px;top:737.50px;transform:scaleX(0.9298);">беговелы</span>
<div style="left:884px;top:756px;width:53px;height:20px;background:#ffcc99;"></div>
<svg class="a" style="left:904px;top:759px" width="14" height="14"><rect x=".5" y=".5" width="13" height="13" rx="2" fill="#fff" stroke="#ababab"/><path d="M2.8 7.4L5.4 10.6L11.2 2.9" fill="none" stroke="#4a9be6" stroke-width="1.6"/></svg>
<span class="t" style="left:808.70px;top:758.50px;transform:scaleX(0.8401);">3000</span>
<span class="t" style="left:941.10px;top:758.50px;transform:scaleX(0.9177);">самокаты</span>
<div style="left:884px;top:777px;width:53px;height:20px;background:#ffcc99;"></div>
<svg class="a" style="left:904px;top:780px" width="14" height="14"><rect x=".5" y=".5" width="13" height="13" rx="2" fill="#fff" stroke="#ababab"/><path d="M2.8 7.4L5.4 10.6L11.2 2.9" fill="none" stroke="#4a9be6" stroke-width="1.6"/></svg>
<span class="t" style="left:808.70px;top:779.50px;transform:scaleX(0.8401);">4000</span>
<span class="t" style="left:941.38px;top:779.50px;transform:scaleX(0.9129);">педальные автомобили</span>
<div style="left:884px;top:798px;width:53px;height:20px;background:#ffcc99;"></div>
<svg class="a" style="left:904px;top:801px" width="14" height="14"><rect x=".5" y=".5" width="13" height="13" rx="2" fill="#fff" stroke="#ababab"/><path d="M2.8 7.4L5.4 10.6L11.2 2.9" fill="none" stroke="#4a9be6" stroke-width="1.6"/></svg>
<span class="t" style="left:808.70px;top:800.50px;transform:scaleX(0.8401);">9000</span>
<span class="t" style="left:941.34px;top:800.50px;transform:scaleX(0.9608);">прочие</span>
<div style="left:1px;top:109px;width:925px;height:56px;border:2px solid #bd0016;box-sizing:border-box;"></div>
</body></html>
